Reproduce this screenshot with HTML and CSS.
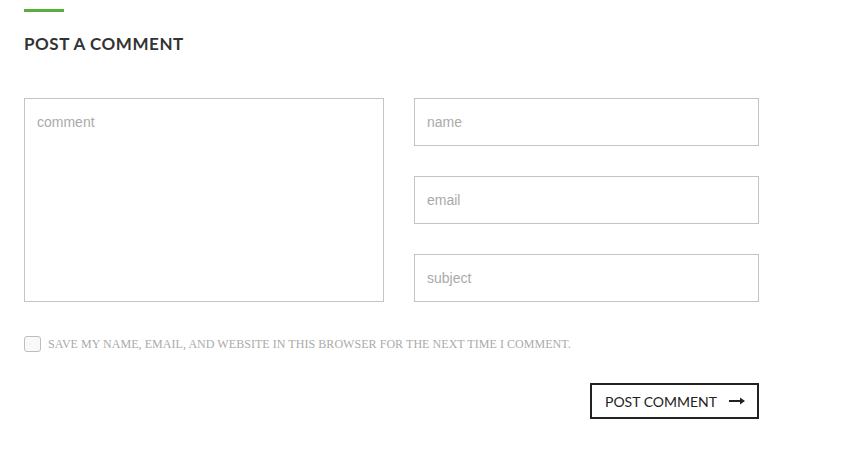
FILE: index.html
```html
<!DOCTYPE html>
<html>
<head>
<meta charset="utf-8">
<link rel="stylesheet" href="styles.css">
</head>
<body>
<div class="wrap">
  <div class="accent"></div>
  <h3 class="title">POST A COMMENT</h3>
  <form class="form">
    <div class="fields">
      <textarea class="field area" placeholder="comment"></textarea>
      <div class="col">
        <input class="field" type="text" placeholder="name">
        <input class="field" type="text" placeholder="email">
        <input class="field" type="text" placeholder="subject">
      </div>
    </div>
    <label class="consent">
      <span class="box"></span>
      <span class="consent-text">Save my name, email, and website in this browser for the next time I comment.</span>
    </label>
    <div class="actions">
      <button type="button" class="submit">POST COMMENT
        <svg class="arrow" width="16" height="8" viewBox="0 0 16 8"><path d="M0 4H13" stroke="#222" stroke-width="2"/><path d="M11 0.5L16 4L11 7.5Z" fill="#222"/></svg>
      </button>
    </div>
  </form>
</div>
</body>
</html>
```
FILE: styles.css
```css
html, body { margin: 0; padding: 0; background: #fff; }
.wrap { padding: 9px 0 0 24px; width: 735px; }
.accent { width: 40px; height: 3px; background: #5aae3c; }
.title {
  margin: 22px 0 0;
  font-family: "Lato", "Liberation Sans", sans-serif;
  font-weight: 700;
  font-size: 17px;
  line-height: 20px;
  color: #333;
  letter-spacing: 0.55px;
}
.form { margin-top: 44px; }
.fields { display: grid; grid-template-columns: 360px 345px; column-gap: 30px; }
.col { display: flex; flex-direction: column; gap: 30px; }
.field {
  box-sizing: border-box;
  margin: 0;
  border: 1px solid #c4c4c4;
  border-radius: 0;
  background: #fff;
  font-family: "Liberation Sans", Arial, sans-serif;
  font-size: 14px;
  color: #333;
  padding: 0 12px;
  height: 48px;
  width: 100%;
  outline: none;
}
.area { height: 204px; resize: none; padding: 15px 12px; display: block; }
.field::placeholder { color: #aaa; }
.consent { display: flex; align-items: center; margin-top: 34px; }
.box {
  box-sizing: border-box;
  width: 17px; height: 16px;
  border: 1px solid #bdbdbd;
  border-radius: 3px;
  background: #f9f9f9;
}
.consent-text {
  margin-left: 7px;
  font-family: "Liberation Serif", "Times New Roman", serif;
  font-size: 12px;
  text-transform: uppercase;
  color: #aaa;
  letter-spacing: 0.05px;
}
.actions { display: flex; justify-content: flex-end; margin-top: 31px; }
.submit {
  box-sizing: border-box;
  height: 36px;
  width: 169px;
  border: 2px solid #222;
  background: #fff;
  padding: 0 0 0 13px;
  display: flex;
  align-items: center;
  font-family: "Lato", "Liberation Sans", sans-serif;
  font-size: 14px;
  color: #222;
}
.arrow { margin-left: 12px; display: block; }
```
